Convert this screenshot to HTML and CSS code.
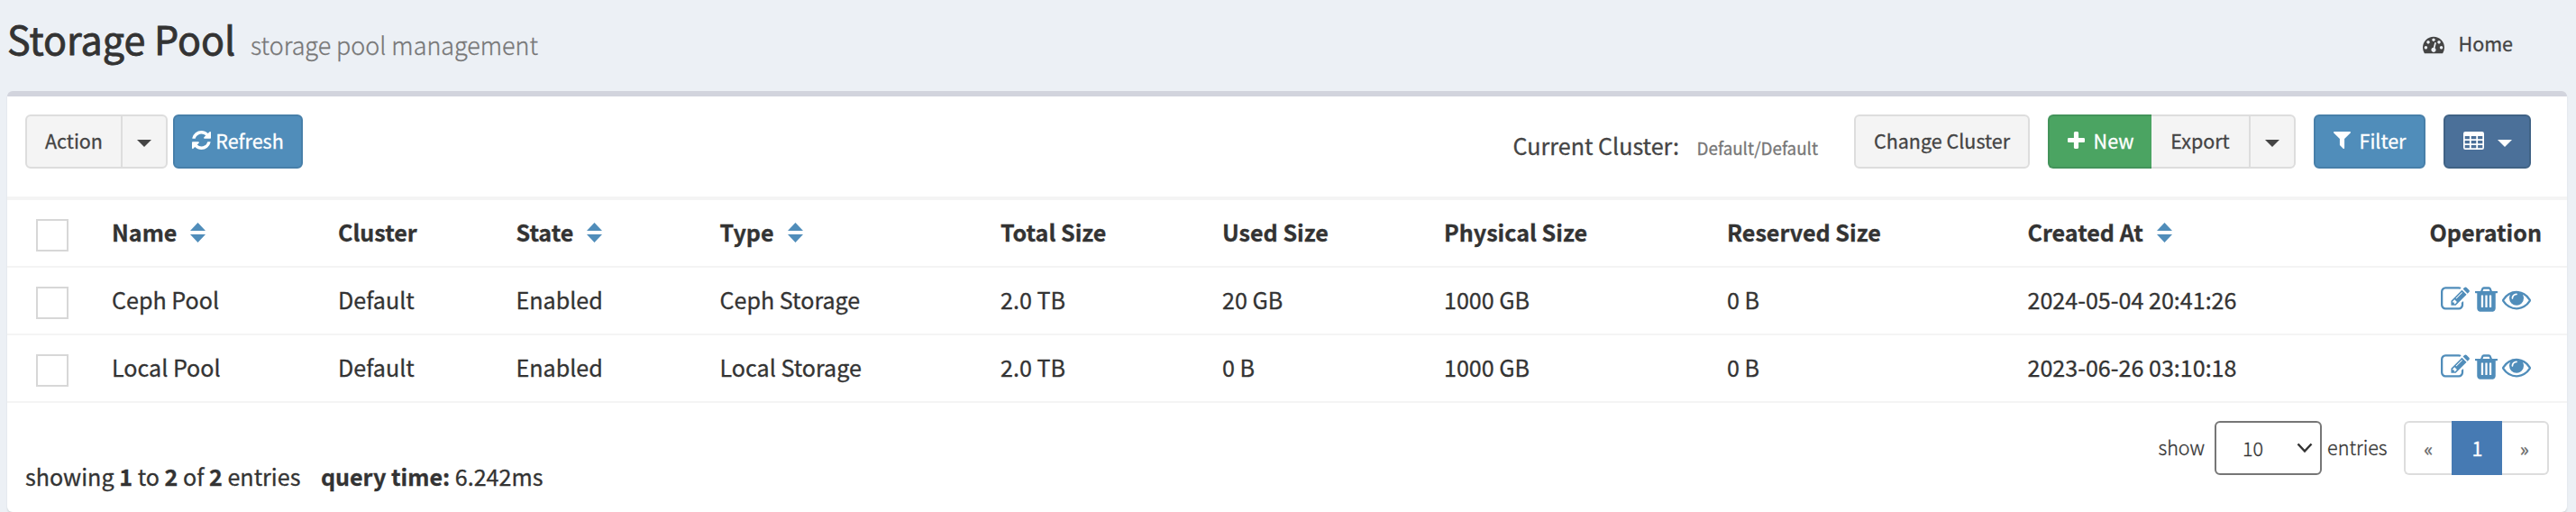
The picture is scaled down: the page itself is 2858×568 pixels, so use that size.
FILE: index.html
```html
<!DOCTYPE html>
<html lang="en">
<head>
<meta charset="utf-8">
<title>Storage Pool</title>
<link rel="stylesheet" href="styles.css">
</head>
<body>
<svg class="sprite" aria-hidden="true">
  <symbol id="gauge" viewBox="0 128 1792 1536"><path d="M384 1152q0-53-37.500-90.500t-90.500-37.500-90.500 37.500-37.500 90.500 37.500 90.500 90.500 37.500 90.500-37.500 37.500-90.500zm192-448q0-53-37.500-90.500t-90.500-37.500-90.500 37.500-37.500 90.500 37.500 90.500 90.500 37.500 90.500-37.500 37.500-90.500zm428 481l101-382q6-26-7.500-48.500t-38.500-29.500-48 6.500-30 39.500l-101 382q-60 5-107 43.500t-63 98.500q-20 77 20 146t117 89 146-20 89-117q16-60-6-117t-72-91zm660-33q0-53-37.500-90.500t-90.500-37.500-90.500 37.500-37.500 90.500 37.500 90.500 90.500 37.500 90.500-37.500 37.500-90.500zm-640-640q0-53-37.500-90.500t-90.500-37.500-90.500 37.500-37.500 90.500 37.500 90.500 90.500 37.500 90.500-37.500 37.500-90.500zm448 192q0-53-37.500-90.500t-90.500-37.500-90.500 37.500-37.500 90.500 37.500 90.500 90.500 37.500 90.500-37.500 37.500-90.500zm320 448q0 261-141 483-19 29-54 29h-1402q-35 0-54-29-141-221-141-483 0-182 71-348t191-286 286-191 348-71 348 71 286 191 191 286 71 348z"/></symbol>
  <symbol id="refresh" viewBox="128 128 1536 1536"><path d="M1639 1056q0 5-1 7-64 268-268 434.500t-478 166.500q-146 0-282.500-55t-243.500-157l-129 129q-19 19-45 19t-45-19-19-45v-448q0-26 19-45t45-19h448q26 0 45 19t19 45-19 45l-137 137q71 66 161 102t187 36q134 0 250-65t186-179q11-17 53-117 8-23 30-23h192q13 0 22.500 9.500t9.500 22.500zm25-800v448q0 26-19 45t-45 19h-448q-26 0-45-19t-19-45 19-45l138-138q-148-137-349-137-134 0-250 65t-186 179q-11 17-53 117-8 23-30 23h-199q-13 0-22.500-9.500t-9.500-22.500v-7q65-268 270-434.500t480-166.500q146 0 284 55.500t245 156.500l130-129q19-19 45-19t45 19 19 45z"/></symbol>
  <symbol id="plus" viewBox="192 128 1408 1408"><path d="M1600 736v192q0 40-28 68t-68 28h-416v416q0 40-28 68t-68 28h-192q-40 0-68-28t-28-68v-416h-416q-40 0-68-28t-28-68v-192q0-40 28-68t68-28h416v-416q0-40 28-68t68-28h192q40 0 68 28t28 68v416h416q40 0 68 28t28 68z"/></symbol>
  <symbol id="filter" viewBox="192 256 1408 1408"><path d="M1595 295q17 41-14 70l-493 493v742q0 42-39 59-13 5-25 5-27 0-45-19l-256-256q-19-19-19-45v-486l-493-493q-31-29-14-70 17-39 59-39h1280q42 0 59 39z"/></symbol>
  <symbol id="table" viewBox="0 0 23 20"><path fill-rule="evenodd" d="M2.200 0H20.800A2.200 2.200 0 0 1 23 2.200V17.800A2.200 2.200 0 0 1 20.800 20H2.200A2.200 2.200 0 0 1 0 17.800V2.200A2.200 2.200 0 0 1 2.200 0ZM1.700 5H6.900V8.200H1.700ZM8.700 5H14.300V8.200H8.700ZM16.100 5H21.300V8.200H16.100ZM1.700 10H6.900V13.200H1.700ZM8.700 10H14.300V13.200H8.700ZM16.100 10H21.300V13.200H16.100ZM1.700 15H6.900V18.300H1.700ZM8.700 15H14.300V18.300H8.700ZM16.100 15H21.300V18.300H16.100Z"/></symbol>
  <symbol id="sort" viewBox="0 0 17 22"><path d="M8.500 0L17 9H0ZM0 13H17L8.500 22Z"/></symbol>
  <symbol id="edit" viewBox="0 0 1792 1792"><path d="M888 1184l116-116-152-152-116 116v56h96v96h56zm440-720q-16-16-33 1l-350 350q-17 17-1 33t33-1l350-350q17-17 1-33zm80 594v190q0 119-84.500 203.500t-203.500 84.500h-832q-119 0-203.500-84.500t-84.500-203.500v-832q0-119 84.500-203.500t203.500-84.500h832q63 0 117 25 15 7 18 23 3 17-9 29l-49 49q-14 14-32 8-23-6-45-6h-832q-66 0-113 47t-47 113v832q0 66 47 113t113 47h832q66 0 113-47t47-113v-126q0-13 9-22l64-64q15-15 35-7t20 29zm-96-738l288 288-672 672h-288v-288zm444 132l-92 92-288-288 92-92q28-28 68-28t68 28l152 152q28 28 28 68t-28 68z"/></symbol>
  <symbol id="trash" viewBox="192 0 1408 1792"><path d="M704 1376v-704q0-14-9-23t-23-9h-64q-14 0-23 9t-9 23v704q0 14 9 23t23 9h64q14 0 23-9t9-23zm256 0v-704q0-14-9-23t-23-9h-64q-14 0-23 9t-9 23v704q0 14 9 23t23 9h64q14 0 23-9t9-23zm256 0v-704q0-14-9-23t-23-9h-64q-14 0-23 9t-9 23v704q0 14 9 23t23 9h64q14 0 23-9t9-23zm-544-992h448l-48-117q-7-9-17-11h-317q-10 2-17 11zm928 32v64q0 14-9 23t-23 9h-96v948q0 83-47 143.500t-113 60.500h-832q-66 0-113-58.500t-47-141.500v-952h-96q-14 0-23-9t-9-23v-64q0-14 9-23t23-9h309l70-167q15-37 54-63t79-26h320q40 0 79 26t54 63l70 167h309q14 0 23 9t9 23z"/></symbol>
  <symbol id="eye" viewBox="0 0 1792 1792"><path d="M1664 960q-152-236-381-353 61 104 61 225 0 185-131.500 316.500t-316.500 131.500-316.500-131.500-131.500-316.500q0-121 61-225-229 117-381 353 133 205 333.500 326.500t434.500 121.500 434.500-121.500 333.500-326.500zm-720-384q0-20-14-34t-34-14q-125 0-214.500 89.500t-89.500 214.500q0 20 14 34t34 14 34-14 14-34q0-86 61-147t147-61q20 0 34-14t14-34zm848 384q0 34-20 69-140 230-376.500 368.500t-499.500 138.500-499.500-139-376.500-368q-20-35-20-69t20-69q140-229 376.500-368t499.500-139 499.500 139 376.500 368q20 35 20 69z"/></symbol>
</svg>

<header class="page-header">
  <h1 class="title">Storage Pool</h1>
  <span class="subtitle">storage pool management</span>
  <a class="home"><svg class="i-gauge"><use href="#gauge"/></svg>Home</a>
</header>

<main class="box">
  <div class="toolbar">
    <div class="group">
      <button class="btn btn-action">Action</button><button class="btn btn-caret"><i class="caret"></i></button>
    </div>
    <button class="btn btn-primary btn-refresh"><svg class="i-refresh"><use href="#refresh"/></svg>Refresh</button>
    <div class="cluster"><span class="cluster-label">Current Cluster:</span><span class="cluster-value">Default/Default</span></div>
    <button class="btn btn-change">Change Cluster</button>
    <div class="group group-new">
      <button class="btn btn-new"><svg class="i-plus"><use href="#plus"/></svg>New</button><button class="btn btn-export">Export</button><button class="btn btn-caret"><i class="caret"></i></button>
    </div>
    <button class="btn btn-primary btn-filter"><svg class="i-filter"><use href="#filter"/></svg>Filter</button>
    <button class="btn btn-columns"><svg class="i-table"><use href="#table"/></svg><i class="caret"></i></button>
  </div>

  <table class="grid">
    <colgroup><col class="c-check"><col class="c-name"><col class="c-cluster"><col class="c-state"><col class="c-type"><col class="c-total"><col class="c-used"><col class="c-physical"><col class="c-reserved"><col class="c-created"><col></colgroup>
    <thead>
      <tr><th class="pick"><span class="check"></span></th><th>Name<svg class="i-sort"><use href="#sort"/></svg></th><th>Cluster</th><th>State<svg class="i-sort"><use href="#sort"/></svg></th><th>Type<svg class="i-sort"><use href="#sort"/></svg></th><th>Total Size</th><th>Used Size</th><th>Physical Size</th><th>Reserved Size</th><th>Created At<svg class="i-sort"><use href="#sort"/></svg></th><th class="op">Operation</th></tr>
    </thead>
    <tbody>
      <tr><td class="pick"><span class="check"></span></td><td>Ceph Pool</td><td>Default</td><td>Enabled</td><td>Ceph Storage</td><td>2.0 TB</td><td>20 GB</td><td>1000 GB</td><td>0 B</td><td>2024-05-04 20:41:26</td><td><div class="ops"><svg class="i-edit"><use href="#edit"/></svg><svg class="i-trash"><use href="#trash"/></svg><svg class="i-eye"><use href="#eye"/></svg></div></td></tr>
      <tr><td class="pick"><span class="check"></span></td><td>Local Pool</td><td>Default</td><td>Enabled</td><td>Local Storage</td><td>2.0 TB</td><td>0 B</td><td>1000 GB</td><td>0 B</td><td>2023-06-26 03:10:18</td><td><div class="ops"><svg class="i-edit"><use href="#edit"/></svg><svg class="i-trash"><use href="#trash"/></svg><svg class="i-eye"><use href="#eye"/></svg></div></td></tr>
    </tbody>
  </table>

  <footer class="footer">
    <p class="summary">showing <b>1</b> to <b>2</b> of <b>2</b> entries<span class="query"><b>query time:</b> 6.242ms</span></p>
    <span class="show">show</span>
    <div class="select"><span>10</span><svg class="i-chevron" viewBox="0 0 18 12"><path d="M1.500 1.500L9 9.500L16.500 1.500"/></svg></div>
    <span class="entries">entries</span>
    <nav class="pages"><span class="page">«</span><span class="page active">1</span><span class="page">»</span></nav>
  </footer>
</main>
</body>
</html>
```

FILE: styles.css
```css
* { box-sizing: border-box; }

body {
  margin: 0;
  height: 568px;
  overflow: hidden;
  background: #ecf0f5;
  color: #333;
  font-family: "Noto Sans CJK SC", "Open Sans", sans-serif;
  font-size: 25.1px;
  white-space: nowrap;
  -webkit-text-stroke: .3px;
}

svg { display: block; flex: none; fill: currentColor; }
.sprite { position: absolute; width: 0; height: 0; }

.page-header {
  display: flex;
  align-items: baseline;
  height: 101px;
  padding: 0 70px 0 8px;
}
.title { width: 270px; margin: 0; font-size: 43px; line-height: 84px; font-weight: 400; -webkit-text-stroke: .8px; }
.subtitle { font-size: 26.9px; font-weight: 300; color: #777; }
.home {
  display: flex;
  align-items: center;
  align-self: flex-start;
  gap: 15px;
  margin-left: auto;
  font-size: 21.5px;
  line-height: 95px;
  color: #444;
}
.i-gauge { width: 24px; height: 20.600px; margin-top: 4px; }

.box {
  height: 467px;
  margin: 0 10px 0 8px;
  background: #fff;
  border-top: 6px solid #d2d4dd;
  border-radius: 6px;
  box-shadow: 0 2px 2px rgba(0, 0, 0, .1);
}

.toolbar {
  display: flex;
  height: 113px;
  padding: 20px 40px 0 20px;
  border-bottom: 2px solid #f4f4f4;
}
.group { display: flex; }
.btn {
  display: flex;
  align-items: center;
  justify-content: center;
  height: 60px;
  padding: 0 0 3px;
  border: 2px solid #ddd;
  border-radius: 6px;
  background: #f4f4f4;
  color: #444;
  font: inherit;
  font-size: 21.500px;
}
.btn-action { width: 108px; border-radius: 6px 0 0 6px; }
.btn-caret { width: 52px; margin-left: -2px; border-radius: 0 6px 6px 0; }
.caret {
  margin-top: 6px;
  border-top: 8px solid;
  border-left: 8px solid transparent;
  border-right: 8px solid transparent;
}
.btn-primary { background: #508dba; border-color: #477fa9; color: #fff; }
.btn-refresh { width: 144px; margin-left: 6px; gap: 5px; }
.i-refresh { width: 21px; height: 21px; }
.cluster { display: flex; align-items: baseline; margin-left: auto; margin-right: 40px; line-height: 68px; color: #444; }
.cluster-label { width: 204px; }
.cluster-value { font-size: 18.800px; color: #777; }
.btn-change { width: 195px; }
.group-new { margin: 0 20px; }
.btn-new { width: 115px; gap: 10px; border-radius: 6px 0 0 6px; background: #4ba462; border-color: #43935a; border-right: 0; color: #fff; }
.i-plus { width: 19px; height: 19px; }
.btn-export { width: 110px; border-left: 0; border-radius: 0; }
.btn-filter { width: 124px; gap: 10px; }
.i-filter { width: 19px; height: 19px; }
.btn-columns { width: 97px; margin-left: 20px; gap: 15px; background: #4b7099; border-color: #406285; color: #fff; }
.i-table { width: 23px; height: 20px; }

.grid { width: 100%; table-layout: fixed; border-collapse: separate; border-spacing: 0; border-bottom: 2px solid #f4f4f4; }
.c-check { width: 100px; }
.c-name { width: 251px; }
.c-cluster { width: 197.5px; }
.c-state { width: 226px; }
.c-type { width: 311.5px; }
.c-total { width: 246px; }
.c-used { width: 246px; }
.c-physical { width: 314px; }
.c-reserved { width: 333.5px; }
.c-created { width: 333px; }
th, td {
  height: 75px;
  padding: 0 0 3px 16px;
  border-top: 2px solid #f4f4f4;
  text-align: left;
  vertical-align: middle;
  line-height: 36px;
}
th { font-weight: 700; }
th.op { padding-right: 28px; text-align: right; }
.pick { padding: 5px 0 0 32px; }
.check { display: block; width: 36px; height: 36px; border: 2px solid #d7d7d7; background: #fff; }
.i-sort { display: inline-block; width: 17px; height: 22px; margin-left: 15px; vertical-align: -1px; color: #508dba; }
.ops { display: flex; justify-content: flex-end; padding-right: 40px; color: #508dba; }
.i-edit { width: 32px; height: 32px; margin-right: 6px; }
.i-trash { width: 25px; height: 32px; margin-right: 5px; }
.i-eye { width: 32px; height: 32px; }

.footer { display: flex; padding: 20px 20px 0; font-size: 21.500px; line-height: 58px; }
.summary { margin: 32px auto 0 0; font-size: 25.100px; line-height: 58px; }
.query { margin-left: 22.5px; }
.show, .entries { font-weight: 300; }
.select {
  display: flex;
  align-items: center;
  justify-content: space-between;
  width: 119px;
  height: 60px;
  margin: 0 6px 0 11px;
  padding: 0 8px 0 29px;
  border: 2px solid #767676;
  border-radius: 6px;
  font-weight: 300;
}
.i-chevron { width: 18px; height: 12px; fill: none; stroke: #333; stroke-width: 2.500; }
.pages { display: flex; width: 161px; height: 60px; margin-left: 18.5px; }
.page { flex: 1; border: 2px solid #ddd; border-right: 0; border-radius: 6px 0 0 6px; text-align: center; line-height: 56px; font-size: 21px; color: #666; }
.page.active { flex: 0 0 56px; border-color: #467ab3; border-radius: 0; background: #467ab3; color: #fff; font-size: 21.500px; }
.page:last-child { border: 2px solid #ddd; border-left: 0; border-radius: 0 6px 6px 0; }
```
